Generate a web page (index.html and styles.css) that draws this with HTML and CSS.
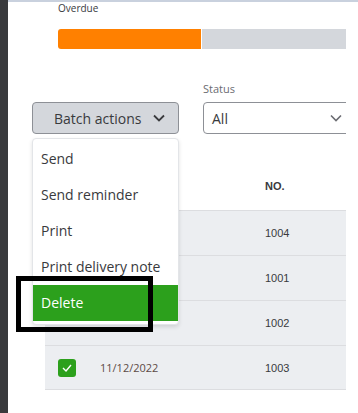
FILE: index.html
```html
<!DOCTYPE html>
<html>
<head>
<meta charset="utf-8">
<link rel="stylesheet" href="styles.css">
</head>
<body>
<div class="app">
  <div class="rail"></div>
  <div class="main">
    <div class="content">
      <div class="overdue-label">Overdue</div>
      <div class="progress">
        <div class="progress-overdue"></div>
        <div class="progress-rest"></div>
      </div>
      <div class="filters">
        <div class="filter">
          <button class="batch-btn"><span>Batch actions</span>
            <svg class="chev" width="12" height="8" viewBox="0 0 12 8"><path d="M1 1.5 L6 6.5 L11 1.5" fill="none" stroke="#393a3d" stroke-width="1.8"/></svg>
          </button>
        </div>
        <div class="filter">
          <div class="filter-label">Status</div>
          <div class="select"><span>All</span>
            <svg class="chev" width="12" height="8" viewBox="0 0 12 8"><path d="M1 1.5 L6 6.5 L11 1.5" fill="none" stroke="#6b6c72" stroke-width="1.6"/></svg>
          </div>
        </div>
      </div>
      <div class="table">
        <div class="thead">
          <div></div><div></div><div class="th">NO.</div>
        </div>
        <div class="row"><div></div><div></div><div class="num">1004</div></div>
        <div class="row"><div></div><div></div><div class="num">1001</div></div>
        <div class="row"><div></div><div></div><div class="num">1002</div></div>
        <div class="row"><div class="cb"><svg width="10" height="8" viewBox="0 0 10 8"><path d="M1 4 L4 7 L9 1" fill="none" stroke="#fff" stroke-width="1.4"/></svg></div><div class="date">11/12/2022</div><div class="num">1003</div></div>
      </div>
      <ul class="menu">
        <li>Send</li>
        <li>Send reminder</li>
        <li>Print</li>
        <li>Print delivery note</li>
        <li class="active">Delete</li>
      </ul>
      <div class="highlight"></div>
    </div>
  </div>
</div>
</body>
</html>
```
FILE: styles.css
```css
html, body {
  margin: 0;
  padding: 0;
  background: #fff;
}
body {
  font-family: "Open Sans", "Liberation Sans", sans-serif;
  color: #393a3d;
  width: 358px;
  height: 413px;
  overflow: hidden;
}
.app {
  display: flex;
  height: 413px;
}
.rail {
  width: 8px;
  flex: none;
  background: #393a3d;
}
.main {
  flex: 1;
  border-top: 2px solid #c9d1de;
}
.content {
  position: relative;
  width: 338px;
  height: 411px;
  overflow: hidden;
}
.overdue-label {
  padding-left: 50px;
  font-size: 10px;
  line-height: 12px;
  color: #393a3d;
}
.progress {
  display: flex;
  gap: 1px;
  margin: 15px 0 0 50px;
  height: 20px;
}
.progress-overdue {
  width: 143px;
  background: #ff8000;
  border-radius: 3px 0 0 3px;
}
.progress-rest {
  flex: 1;
  background: #d4d7dc;
}
.filters {
  display: flex;
  align-items: flex-end;
  gap: 24px;
  margin: 33px 0 0 24px;
}
.filter-label {
  font-size: 11px;
  line-height: 14px;
  color: #6b6c72;
  margin-bottom: 6px;
}
.batch-btn {
  box-sizing: border-box;
  width: 147px;
  height: 32px;
  display: flex;
  align-items: center;
  padding: 0 0 0 21px;
  gap: 12px;
  background: #d4d7dc;
  border: 1px solid #8d9096;
  border-radius: 4px;
  font-family: inherit;
  font-size: 14px;
  color: #393a3d;
}
.select {
  box-sizing: border-box;
  width: 160px;
  height: 32px;
  display: flex;
  align-items: center;
  justify-content: space-between;
  padding: 0 20px 0 8px;
  border: 1px solid #8d9096;
  border-radius: 4px;
  font-size: 14px;
  color: #393a3d;
}
.table {
  margin: 28px 0 0 37px;
  width: 301px;
  font-family: "Liberation Sans", Arial, sans-serif;
  font-size: 11px;
}
.thead, .row {
  display: grid;
  grid-template-columns: 42px 165px 1fr;
  align-items: center;
  padding-left: 13px;
}
.thead {
  height: 48px;
}
.th {
  font-weight: bold;
  color: #393a3d;
}
.row {
  box-sizing: border-box;
  height: 45px;
  background: #eceef1;
  border-top: 1px solid #dcdde0;
}
.row:last-child {
  border-bottom: 1px solid #dcdde0;
}
.cb {
  width: 18px;
  height: 18px;
  border-radius: 3px;
  background: #2ca01c;
  display: flex;
  align-items: center;
  justify-content: center;
}
.date {
  font-family: "Open Sans", sans-serif;
  color: #5c4a45;
}
.num {
  color: #393a3d;
}
.menu {
  position: absolute;
  left: 24px;
  top: 136px;
  box-sizing: border-box;
  width: 147px;
  margin: 0;
  padding: 2px 0 3px;
  list-style: none;
  background: #fff;
  border: 1px solid #e3e5e8;
  border-radius: 4px;
  box-shadow: 0 2px 4px rgba(0, 0, 0, 0.12);
}
.menu li {
  height: 36px;
  line-height: 36px;
  padding-left: 8px;
  font-size: 14px;
  color: #393a3d;
  white-space: nowrap;
}
.menu li.active {
  background: #2ca01c;
  color: #fff;
}
.highlight {
  position: absolute;
  left: 8px;
  top: 274px;
  box-sizing: border-box;
  width: 137px;
  height: 56px;
  border: 5px solid #000;
}
```
